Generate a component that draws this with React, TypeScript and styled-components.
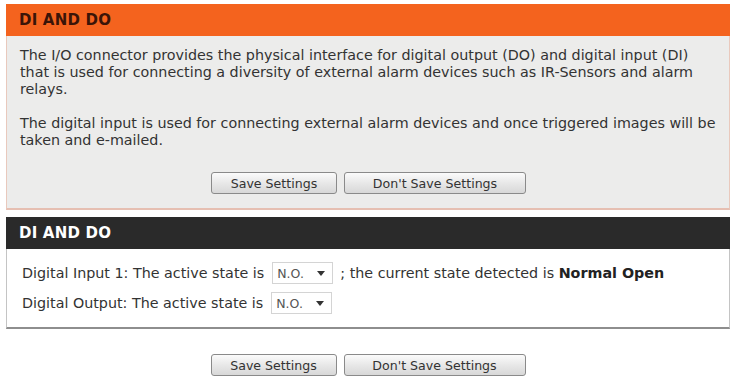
import React from "react";
import styled, { createGlobalStyle } from "styled-components";

const Global = createGlobalStyle`
  html, body { margin: 0; padding: 0; background: #ffffff; }
  body { font-family: "DejaVu Sans", Verdana, sans-serif; color: #333; }
`;

const Page = styled.div`
  width: 724px;
  padding: 4px 0 0 6px;
  display: flex;
  flex-direction: column;
`;

const Section = styled.section<{ $gap?: number }>`
  display: flex;
  flex-direction: column;
  margin-bottom: ${(p) => p.$gap ?? 0}px;
`;

const Header = styled.div<{ $tone: "orange" | "dark" }>`
  height: 32px;
  display: flex;
  align-items: center;
  padding-left: 13px;
  background: ${(p) => (p.$tone === "orange" ? "#f4631e" : "#2a2a2a")};
  color: ${(p) => (p.$tone === "orange" ? "#3a1408" : "#ffffff")};
  font-family: "DejaVu Sans", Verdana, sans-serif;
  font-weight: bold;
  font-size: 15px;
  letter-spacing: 0.2px;
`;

const InfoBody = styled.div`
  background: #ececeb;
  border: 1px solid #e9c9bd;
  border-top: none;
  border-bottom: 2px solid #e6bfb2;
  padding: 11px 12px 14px 13px;
  font-size: 14.3px;
  line-height: 17px;
  color: #333;
  white-space: nowrap;
`;

const Para = styled.p`
  margin: 0 0 17px 0;
  &:last-of-type { margin-bottom: 0; }
`;

const ButtonRow = styled.div<{ $top: number }>`
  display: flex;
  justify-content: center;
  gap: 7px;
  margin-top: ${(p) => p.$top}px;
`;

const Button = styled.button<{ $w: number }>`
  width: ${(p) => p.$w}px;
  height: 22px;
  border: 1px solid #8a8a8a;
  border-radius: 3px;
  background: linear-gradient(#fbfbfb, #e6e6e6 55%, #d8d8d8);
  font-family: "DejaVu Sans", Verdana, sans-serif;
  font-size: 12.6px;
  color: #333;
  padding: 0;
  cursor: pointer;
`;

const FormBody = styled.div`
  background: #ffffff;
  border: 1px solid #c4c4c4;
  border-top: none;
  border-bottom: 2px solid #8e8e8e;
  padding: 13px 12px 13px 15px;
  display: flex;
  flex-direction: column;
  gap: 8px;
  font-size: 14.3px;
  color: #333;
`;

const Row = styled.div`
  display: flex;
  align-items: center;
  height: 22px;
  white-space: pre;
`;

const SelectBox = styled.div`
  width: 61px;
  height: 22px;
  box-sizing: border-box;
  margin: 0 7px 0 8px;
  border: 1px solid #d4d4d4;
  background: #fff;
  display: flex;
  align-items: center;
  justify-content: space-between;
  padding: 0 7px 0 4px;
  color: #555;
  font-size: 12.5px;
`;

const Caret = styled.span`
  width: 0;
  height: 0;
  border-left: 4px solid transparent;
  border-right: 4px solid transparent;
  border-top: 5px solid #333;
`;

const Strong = styled.b`
  font-weight: bold;
  color: #222;
`;

const Select = ({ value }: { value: string }) => (
  <SelectBox>
    <span>{value}</span>
    <Caret />
  </SelectBox>
);

export default function App() {
  return (
    <>
      <Global />
      <Page>
        <Section $gap={7}>
          <Header $tone="orange">DI AND DO</Header>
          <InfoBody>
            <Para>
              The I/O connector provides the physical interface for digital output (DO) and digital input (DI)
              <br />
              that is used for connecting a diversity of external alarm devices such as IR-Sensors and alarm
              <br />
              relays.
            </Para>
            <Para>
              The digital input is used for connecting external alarm devices and once triggered images will be
              <br />
              taken and e-mailed.
            </Para>
            <ButtonRow $top={23}>
              <Button $w={126}>Save Settings</Button>
              <Button $w={182}>Don't Save Settings</Button>
            </ButtonRow>
          </InfoBody>
        </Section>
        <Section>
          <Header $tone="dark">DI AND DO</Header>
          <FormBody>
            <Row>
              Digital Input 1: The active state is
              <Select value="N.O." />
              {"; the current state detected is "}
              <Strong>Normal Open</Strong>
            </Row>
            <Row>
              Digital Output: The active state is
              <Select value="N.O." />
            </Row>
          </FormBody>
        </Section>
        <ButtonRow $top={25}>
          <Button $w={126}>Save Settings</Button>
          <Button $w={182}>Don't Save Settings</Button>
        </ButtonRow>
      </Page>
    </>
  );
}
